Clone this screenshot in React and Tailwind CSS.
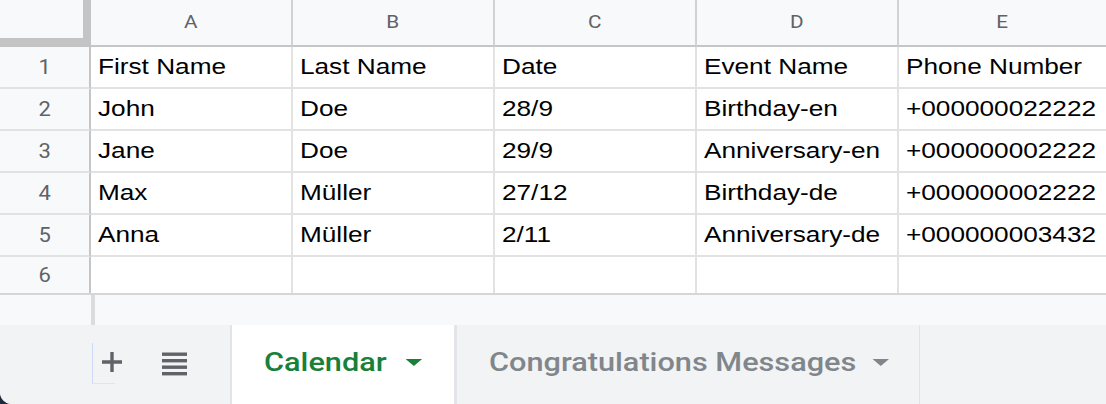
import React from "react";

const columns = ["A", "B", "C", "D", "E"];
const colWidths = ["w-[202px]", "w-[202px]", "w-[202px]", "w-[202px]", "flex-1"];

const rows = [
  ["First Name", "Last Name", "Date", "Event Name", "Phone Number"],
  ["John", "Doe", "28/9", "Birthday-en", "+000000022222"],
  ["Jane", "Doe", "29/9", "Anniversary-en", "+000000002222"],
  ["Max", "Müller", "27/12", "Birthday-de", "+000000002222"],
  ["Anna", "Müller", "2/11", "Anniversary-de", "+000000003432"],
];

const sans = { fontFamily: '"Liberation Sans", Arial, sans-serif' };
const roboto = { fontFamily: 'Roboto, "Liberation Sans", sans-serif' };

function Caret({ color }) {
  return (
    <svg width="14" height="7" viewBox="0 0 14 7" className="shrink-0">
      <path d="M0 0 L14 0 L7 7 Z" fill={color} />
    </svg>
  );
}

function ColumnLabel({ children }) {
  return (
    <span
      className="inline-block origin-center scale-x-[1.15] text-[18px] leading-none text-[#5f6368]"
      style={roboto}
    >
      {children}
    </span>
  );
}

function RowLabel({ children }) {
  return (
    <span
      className="inline-block origin-center scale-x-[1.1] text-[20px] leading-none text-[#5f6368]"
      style={roboto}
    >
      {children}
    </span>
  );
}

function HeaderRow() {
  return (
    <div className="flex h-[47px] shrink-0 bg-[#f8f9fa]">
      <div className="w-[91px] h-full border-r-[8px] border-b-[9px] border-[#c4c4c4] shrink-0" />
      {columns.map((c, i) => (
        <div
          key={c}
          className={`${colWidths[i]} shrink-0 h-full flex items-center justify-center pb-[2px] border-b-2 border-b-[#c6c6c6] ${
            i < 4 ? "border-r-2 border-r-[#d2d2d2]" : ""
          }`}
        >
          <ColumnLabel>{c}</ColumnLabel>
        </div>
      ))}
    </div>
  );
}

function RowHeader({ n, last }) {
  return (
    <div
      className={`w-[91px] shrink-0 h-full flex items-center justify-center bg-[#f8f9fa] border-r-2 border-r-[#c6c6c6] ${
        last ? "" : "border-b-2 border-b-[#e2e2e2]"
      }`}
    >
      <RowLabel>{n}</RowLabel>
    </div>
  );
}

function DataRow({ n, cells }) {
  return (
    <div className="flex h-[42px] shrink-0">
      <RowHeader n={n} />
      {cells.map((text, i) => (
        <div
          key={i}
          className={`${colWidths[i]} shrink-0 h-full flex items-center pl-[7px] bg-white border-b-2 border-b-[#e2e2e2] overflow-hidden whitespace-nowrap ${
            i < 4 ? "border-r-2 border-r-[#e2e2e2]" : ""
          }`}
        >
          <span
            className="inline-block origin-left scale-x-[1.19] text-[22px] leading-none text-black"
            style={sans}
          >
            {text}
          </span>
        </div>
      ))}
    </div>
  );
}

function EmptyRow() {
  return (
    <div className="flex h-[38px] shrink-0 border-b-2 border-b-[#d6d6d6]">
      <RowHeader n={6} last />
      {columns.map((c, i) => (
        <div
          key={c}
          className={`${colWidths[i]} shrink-0 h-full bg-white ${i < 4 ? "border-r-2 border-r-[#e2e2e2]" : ""}`}
        />
      ))}
    </div>
  );
}

function PlusIcon() {
  return (
    <svg width="20" height="20" viewBox="0 0 20 20">
      <path d="M10 0 V20 M0 10 H20" stroke="#5f6368" strokeWidth="3.4" fill="none" />
    </svg>
  );
}

function ListIcon() {
  return (
    <svg width="25" height="24" viewBox="0 0 25 24">
      <rect x="0" y="0.5" width="25" height="3.4" fill="#5f6368" />
      <rect x="0" y="7" width="25" height="3.4" fill="#5f6368" />
      <rect x="0" y="13.5" width="25" height="3.4" fill="#5f6368" />
      <rect x="0" y="20" width="25" height="3.4" fill="#5f6368" />
    </svg>
  );
}

function SheetTabs() {
  return (
    <div className="flex h-[79px] shrink-0 bg-[#f1f3f4]">
      <div className="w-[232px] shrink-0 h-full flex items-start pt-[18px] pl-[92px] border-r-2 border-r-[#e3e4e6]">
        {/* add-sheet button with its faint focus outline */}
        <div className="relative h-[41px] w-[23px] border-l border-l-[#cdd9f6] border-b border-b-[#e2e4e8]">
          <div className="absolute left-[9px] top-[9px]">
            <PlusIcon />
          </div>
        </div>
        <div className="ml-[47px] mt-[9px]">
          <ListIcon />
        </div>
      </div>
      <div className="w-[222px] shrink-0 h-full bg-white flex items-center pl-[32px] pb-[5px]">
        <div className="flex items-center origin-left scale-x-[1.18] gap-[16px]">
          <span className="text-[26px] leading-none font-medium text-[#188038]" style={roboto}>
            Calendar
          </span>
          <Caret color="#188038" />
        </div>
      </div>
      <div className="w-[466px] shrink-0 h-full flex items-center pl-[32px] pb-[5px] border-l-[3px] border-l-[#e4e5e8] border-r border-r-[#e1e3e6]">
        <div className="flex items-center origin-left scale-x-[1.18] gap-[14px]">
          <span className="text-[26px] leading-none font-medium text-[#80868b] whitespace-nowrap" style={roboto}>
            Congratulations Messages
          </span>
          <Caret color="#80868b" />
        </div>
      </div>
      <div className="flex-1" />
    </div>
  );
}

export default function App() {
  return (
    <div className="w-[1106px] h-[404px] bg-[#1d2b3d] overflow-hidden">
      <div className="w-full h-full bg-white rounded-bl-[12px] overflow-hidden flex flex-col">
        <HeaderRow />
        {rows.map((cells, i) => (
          <DataRow key={i} n={i + 1} cells={cells} />
        ))}
        <EmptyRow />
        <div className="flex h-[30px] shrink-0 bg-[#f8f9fa]">
          <div className="w-[95px] shrink-0 h-full border-r-4 border-r-[#dadce0]" />
          <div className="flex-1" />
        </div>
        <SheetTabs />
      </div>
    </div>
  );
}
